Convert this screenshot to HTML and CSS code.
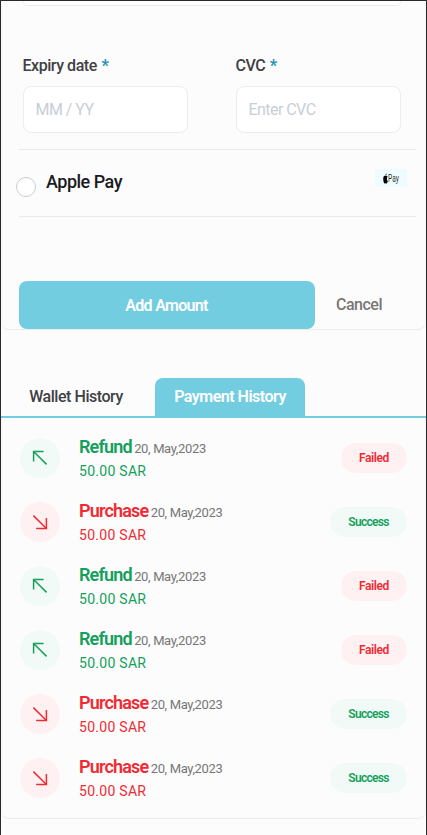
FILE: index.html
```html
<!DOCTYPE html>
<html lang="en">
<head>
<meta charset="utf-8">
<title>Wallet</title>
<link rel="stylesheet" href="styles.css">
</head>
<body>
<svg class="defs" aria-hidden="true">
  <symbol id="up" viewBox="0 0 40 40"><path d="M13.6 23.5V13.6H23.6M13.8 13.8L26.6 26.4"/></symbol>
  <symbol id="down" viewBox="0 0 40 40"><path d="M13.4 13.6L26.2 26.2M26.4 16V26.4H16.2"/></symbol>
</svg>
<main class="page">
  <section class="card payment">
    <div class="card-number"></div>
    <div class="fields">
      <label class="field"><span class="label">Expiry date <b>*</b></span><input placeholder="MM / YY"></label>
      <label class="field"><span class="label">CVC <b>*</b></span><input placeholder="Enter CVC"></label>
    </div>
    <div class="method">
      <span class="radio"></span>
      <span class="method-name">Apple Pay</span>
      <span class="pay"><svg width="5" height="11" viewBox="0 0 6 11" preserveAspectRatio="none"><path d="M3 3C1.4 2.3.3 3.6.3 6S1.3 10.5 2.1 10.5 2.8 10.2 3.2 10.2 3.8 10.5 4.3 10.5 5.4 9.3 5.7 8C4.3 7.3 4.4 4.6 5.5 3.8 4.8 2.6 3.8 2.7 3 3ZM3 2.6C3 1.5 3.5.7 4.3.4 4.4 1.5 3.8 2.6 3 2.6Z"/></svg><span class="pay-text">Pay</span></span>
    </div>
    <div class="actions">
      <button class="add">Add Amount</button>
      <button class="cancel">Cancel</button>
    </div>
  </section>
  <nav class="tabs">
    <a class="tab">Wallet History</a>
    <a class="tab active">Payment History</a>
  </nav>
  <section class="card history">
    <article class="row refund"><svg class="arrow"><use href="#up"/></svg><div class="info"><p class="line"><strong>Refund</strong><time>20, May,2023</time></p><p class="amount">50.00 SAR</p></div><span class="badge failed">Failed</span></article>
    <article class="row purchase"><svg class="arrow"><use href="#down"/></svg><div class="info"><p class="line"><strong>Purchase</strong><time>20, May,2023</time></p><p class="amount">50.00 SAR</p></div><span class="badge success">Success</span></article>
    <article class="row refund"><svg class="arrow"><use href="#up"/></svg><div class="info"><p class="line"><strong>Refund</strong><time>20, May,2023</time></p><p class="amount">50.00 SAR</p></div><span class="badge failed">Failed</span></article>
    <article class="row refund"><svg class="arrow"><use href="#up"/></svg><div class="info"><p class="line"><strong>Refund</strong><time>20, May,2023</time></p><p class="amount">50.00 SAR</p></div><span class="badge failed">Failed</span></article>
    <article class="row purchase"><svg class="arrow"><use href="#down"/></svg><div class="info"><p class="line"><strong>Purchase</strong><time>20, May,2023</time></p><p class="amount">50.00 SAR</p></div><span class="badge success">Success</span></article>
    <article class="row purchase"><svg class="arrow"><use href="#down"/></svg><div class="info"><p class="line"><strong>Purchase</strong><time>20, May,2023</time></p><p class="amount">50.00 SAR</p></div><span class="badge success">Success</span></article>
  </section>
</main>
</body>
</html>
```
FILE: styles.css
```css
* { box-sizing: border-box; }
body { margin: 0; font-family: Roboto, "Liberation Sans", sans-serif; color: #3f3f46; }
p { margin: 0; }
button, input { font: inherit; }
.defs { display: none; }
.page { height: 835px; overflow: hidden; background: #fcfcfc; border: 1px solid #2b292b; border-bottom: 0; }
.card { border: 1px solid #ebeced; border-top: 0; border-radius: 0 0 8px 8px; }
.payment { height: 329px; padding: 0 9px 0 18px; border-left-color: #f5f5f6; border-right-color: #f5f5f6; }
.card-number { width: 378px; height: 5px; margin-left: 3px; border: 1px solid #ebeced; border-top: 0; border-radius: 0 0 8px 8px; background: #fff; }
.fields { display: flex; gap: 48px; margin-left: 3px; padding-top: 50px; }
.field { display: flex; flex-direction: column; width: 165px; }
.label { height: 30px; margin-left: -0.5px; line-height: 20px; font-size: 16px; font-weight: 500; letter-spacing: -0.45px; white-space: nowrap; }
.label b { margin-left: 1px; font-weight: 800; color: #2596b5; }
.field input { width: 165px; height: 47px; padding: 0 11.5px; border: 1px solid #ebeced; border-radius: 8px; background: #fff; font-size: 16px; letter-spacing: -0.55px; outline: 0; }
.field input::placeholder { color: #c9ced6; opacity: 1; }
.method { display: flex; height: 68px; margin-top: 16px; padding-right: 9px; border: solid #e9eaeb; border-width: 1px 0; margin-left: -1px; }
.radio { width: 20px; height: 20px; margin: 27px 10px 0 -3px; border: 1px solid #c9ced6; border-radius: 50%; background: #fff; }
.method-name { flex: 1; padding-top: 20px; line-height: 24px; font-size: 18px; font-weight: 500; letter-spacing: -0.5px; color: #1b1b1f; }
.pay { display: flex; align-items: center; gap: 0; width: 32px; height: 18px; margin-top: 19px; padding-left: 8px; background: #effcff; font-size: 11px; color: #333; }
.pay-text { transform: scaleX(0.6); transform-origin: left; }
.actions { display: flex; margin: 64px 0 0 -1px; }
.add { width: 296px; height: 48px; border: 0; border-radius: 8px; background: #73cde0; color: #fff; font-size: 16px; font-weight: 600; letter-spacing: -0.7px; padding: 0 1px 0 0; }
.cancel { padding: 0 0 2px 21px; border: 0; background: none; color: #777; font-size: 16px; font-weight: 500; letter-spacing: -0.5px; }
.tabs { display: flex; height: 40px; margin-top: 48px; border-bottom: 2px solid #73cde0; }
.tab { width: 150px; height: 38px; line-height: 38px; text-align: center; font-size: 16px; font-weight: 500; letter-spacing: -0.45px; white-space: nowrap; }
.tab:first-child { margin-right: 4px; }
.active { border-radius: 8px 8px 0 0; background: #73cde0; color: #fff; font-weight: 600; letter-spacing: -0.5px; }
.history { height: 401px; padding: 20px 18px 0; display: flex; flex-direction: column; gap: 24px; border-left-color: #f5f5f6; border-right-color: #f5f5f6; }
.row { display: flex; align-items: center; height: 40px; }
.arrow { width: 40px; height: 40px; margin-right: 19px; border-radius: 50%; fill: none; stroke: currentColor; stroke-width: 1.5; }
.refund { color: #12a05b; }
.refund .arrow { background: #f1faf6; }
.purchase { color: #f02a33; }
.purchase .arrow { background: #fff1f2; }
.info { flex: 1; padding-top: 2px; }
.line { display: flex; align-items: baseline; gap: 2.4px; height: 24px; line-height: 24px; }
.line strong { font-size: 18px; font-weight: 600; letter-spacing: -0.83px; }
.line time { font-size: 13px; letter-spacing: -0.36px; color: #777; }
.amount { height: 24px; line-height: 24px; font-size: 14px; letter-spacing: 0.28px; }
.badge { height: 30px; line-height: 30px; border-radius: 15px; text-align: center; font-size: 12px; font-weight: 600; letter-spacing: -0.4px; }
.failed { width: 66px; background: #fff1f2; color: #f02a33; }
.success { width: 77px; background: #f1faf6; color: #12a05b; letter-spacing: -0.7px; }
```
